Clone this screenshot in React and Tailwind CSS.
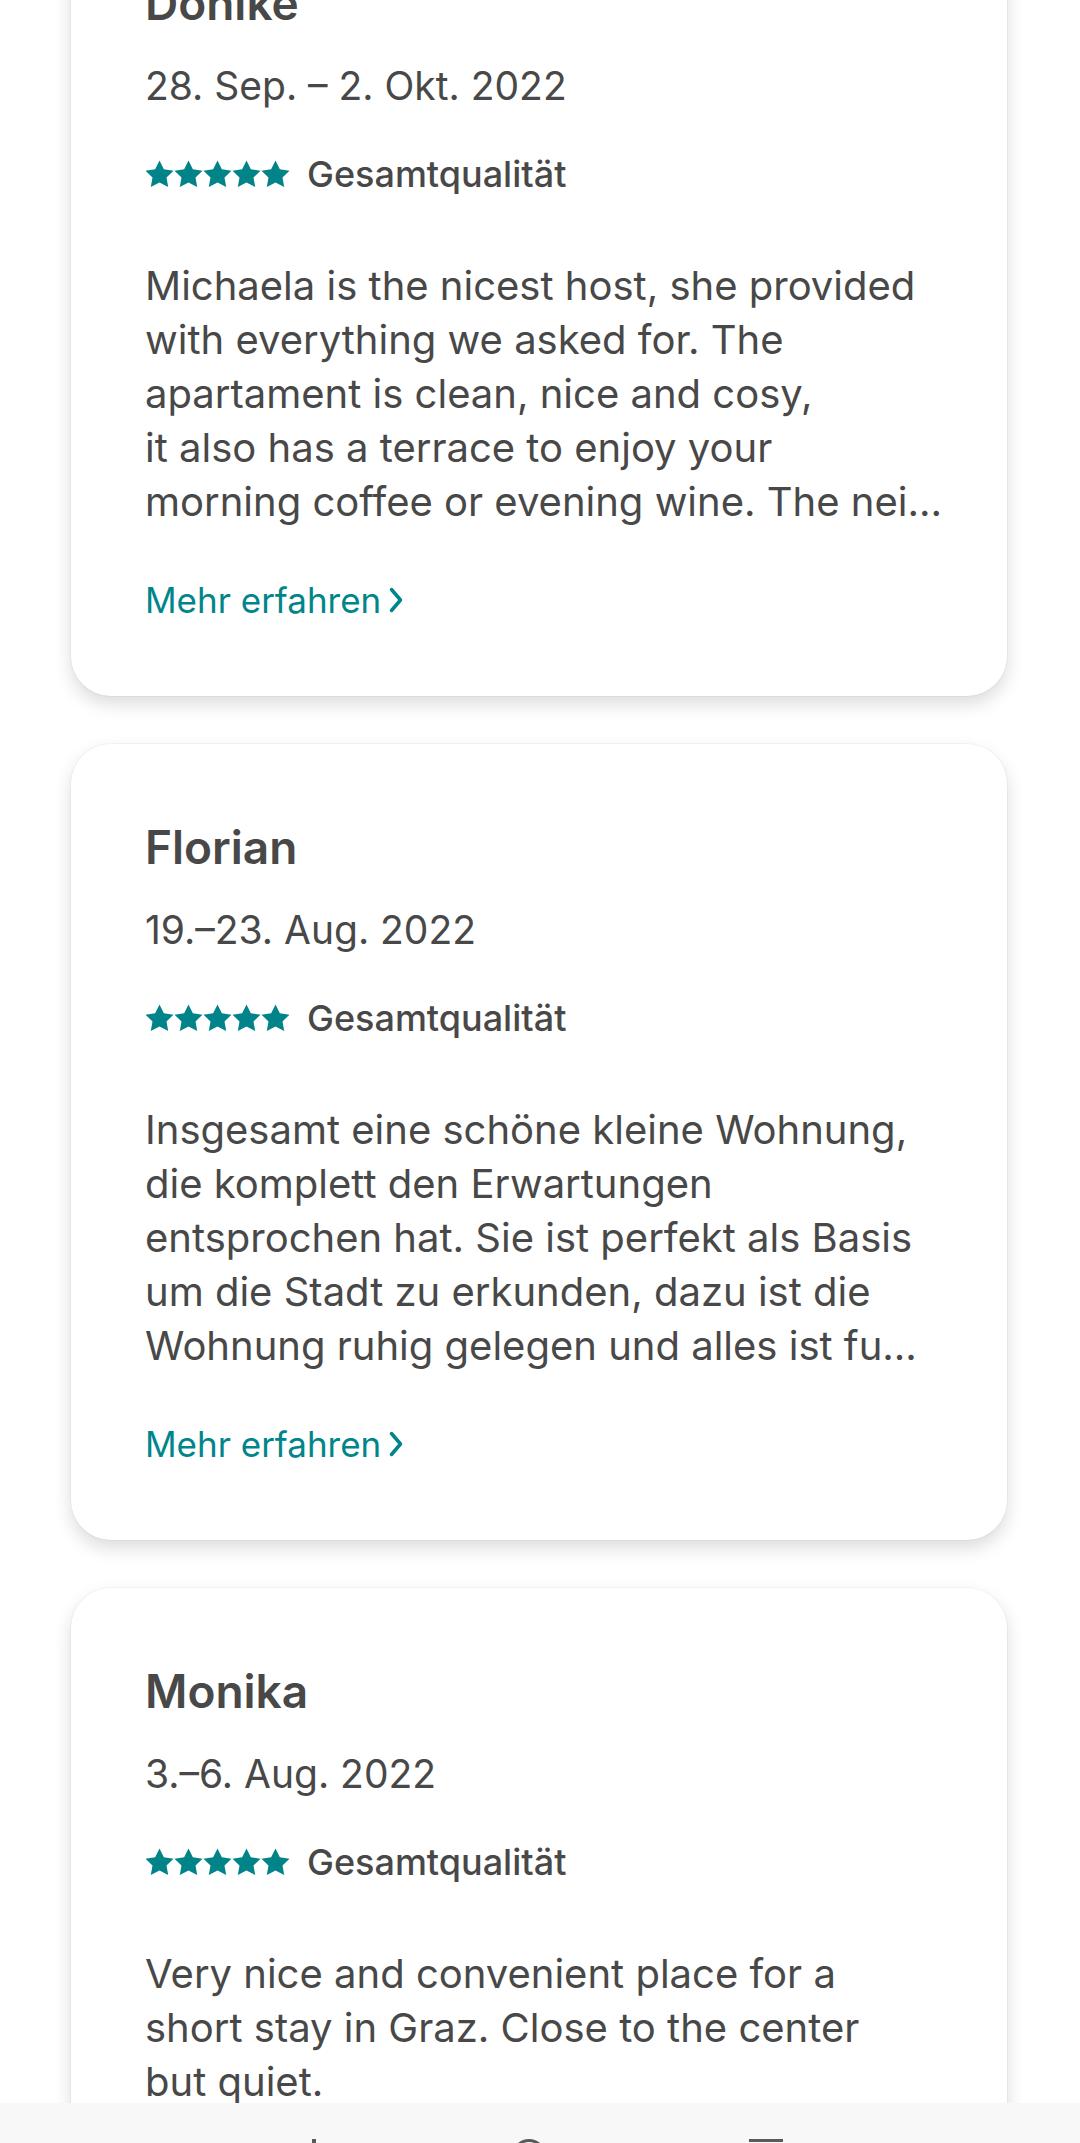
const reviews = [
    {
        name: 'Donike',
        date: '28. Sep. – 2. Okt. 2022',
        lines: [
            'Michaela is the nicest host, she provided',
            'with everything we asked for. The',
            'apartament is clean, nice and cosy,',
            'it also has a terrace to enjoy your',
            'morning coffee or evening wine. The nei...',
        ],
        more: true,
    },
    {
        name: 'Florian',
        date: '19.–23. Aug. 2022',
        lines: [
            'Insgesamt eine schöne kleine Wohnung,',
            'die komplett den Erwartungen',
            'entsprochen hat. Sie ist perfekt als Basis',
            'um die Stadt zu erkunden, dazu ist die',
            'Wohnung ruhig gelegen und alles ist fu...',
        ],
        more: true,
    },
    {
        name: 'Monika',
        date: '3.–6. Aug. 2022',
        lines: [
            'Very nice and convenient place for a',
            'short stay in Graz. Close to the center',
            'but quiet.',
        ],
        more: false,
    },
];

function Star() {
    return (
        <svg viewBox="0 0 24 24" className="w-[29px] h-[29px]" fill="#008489">
            <path d="M12 0.4l3.6 7.3 8 1.1-5.8 5.6 1.4 7.9L12 18.6l-7.2 3.7 1.4-7.9L0.4 8.8l8-1.1z" />
        </svg>
    );
}

function ReviewCard({ review }) {
    return (
        <div className="bg-white rounded-[40px] shadow-[0_0_0_1px_rgba(0,0,0,0.03),0_8px_18px_rgba(0,0,0,0.14)] pl-[74px] pr-[30px] pt-[75px] pb-[69px] text-[#484848]">
            <p className="text-[46px] leading-[56px] font-semibold">{review.name}</p>
            <p className="mt-[28px] text-[39px] leading-[54px]">{review.date}</p>
            <div className="mt-[41px] flex items-center h-[40px]">
                <div className="flex">
                    <Star />
                    <Star />
                    <Star />
                    <Star />
                    <Star />
                </div>
                <span className="ml-[17px] text-[36px] font-medium">Gesamtqualität</span>
            </div>
            <div className="mt-[65px] text-[40px] leading-[54px]">
                {review.lines.map((line) => (
                    <p key={line} className="whitespace-nowrap">
                        {line}
                    </p>
                ))}
            </div>
            {review.more && (
                <div className="mt-[44px] flex items-center h-[54px] text-[35px] text-[#00858a]">
                    <span>Mehr erfahren</span>
                    <svg viewBox="0 0 16 28" className="ml-[7px] w-[16px] h-[28px]" fill="none" stroke="#00858a" strokeWidth="3.5" strokeLinecap="round" strokeLinejoin="round">
                        <path d="M3.5 3.5l9 10.5-9 10.5" />
                    </svg>
                </div>
            )}
        </div>
    );
}

export default function App() {
    return (
        <div className="w-[1080px] h-[2143px] overflow-hidden bg-white flex flex-col" style={{ fontFamily: 'Inter, "Noto Sans", sans-serif' }}>
            <div className="flex-1 overflow-hidden">
                <div className="-mt-[100px] ml-[71px] w-[936px] flex flex-col gap-[48px]">
                    {reviews.map((review) => (
                        <ReviewCard key={review.name} review={review} />
                    ))}
                </div>
            </div>
            <div className="h-[40px] shrink-0 bg-[#f8f8f8] flex items-start pt-[36px]">
                <div className="ml-[312px] flex gap-[10px]">
                    <div className="w-[4px] h-[28px] bg-[#5a5a5a]" />
                </div>
                <div className="ml-[196px] w-[34px] h-[34px] rounded-full border-[3px] border-[#5a5a5a]" />
                <div className="ml-[203px] w-[34px] h-[30px] border-t-[3px] border-[#5a5a5a]" />
            </div>
        </div>
    );
}
